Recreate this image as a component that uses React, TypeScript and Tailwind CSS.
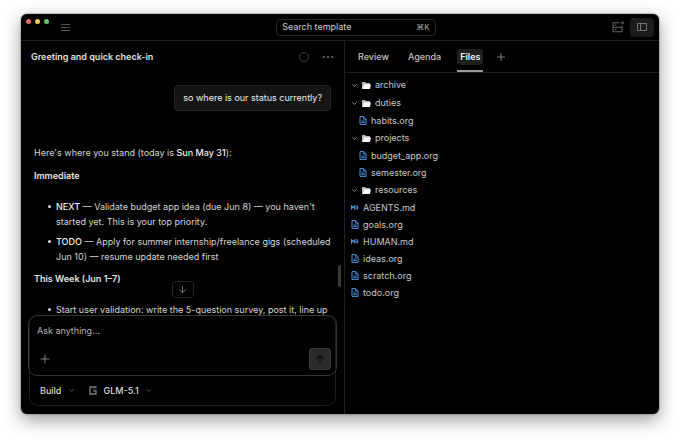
import React, { useState } from 'react';
import { ArrowDown, ArrowUp, ChevronDown, Plus } from 'lucide-react';

type FileKind = 'org' | 'md';

interface TreeNode {
  name: string;
  kind: 'folder' | FileKind;
  children?: TreeNode[];
}

const tree: TreeNode[] = [
  { name: 'archive', kind: 'folder' },
  { name: 'duties', kind: 'folder', children: [{ name: 'habits.org', kind: 'org' }] },
  {
    name: 'projects',
    kind: 'folder',
    children: [
      { name: 'budget_app.org', kind: 'org' },
      { name: 'semester.org', kind: 'org' },
    ],
  },
  { name: 'resources', kind: 'folder' },
  { name: 'AGENTS.md', kind: 'md' },
  { name: 'goals.org', kind: 'org' },
  { name: 'HUMAN.md', kind: 'md' },
  { name: 'ideas.org', kind: 'org' },
  { name: 'scratch.org', kind: 'org' },
  { name: 'todo.org', kind: 'org' },
];

const FolderIcon = () => (
  <svg viewBox="0 0 18 14" className="h-[7px] w-[9px] shrink-0" aria-hidden="true">
    <path d="M0 14V1.5C0 .7.7 0 1.5 0H6l2 2h6.5c.8 0 1.5.7 1.5 1.5V6H4L1.5 14z" fill="#bdbdbd" />
    <path d="M4 5h14l-2.2 9H1z" fill="#ffffff" />
  </svg>
);

const DocIcon = () => (
  <svg viewBox="0 0 16 18" className="h-[9px] w-2 shrink-0" fill="none" stroke="#4f95e0" aria-hidden="true">
    <path d="M2 1.2h7.5L14 5.8v11H2z" strokeWidth="2" strokeLinejoin="round" />
    <path d="M9 1.5V6.2h5" strokeWidth="1.6" />
    <path d="M4.5 10h7M4.5 13.2h7" strokeWidth="1.8" />
  </svg>
);

const MarkdownIcon = () => (
  <svg viewBox="0 0 16 10" className="h-[5px] w-2 shrink-0" fill="none" stroke="#4f95e0" strokeWidth="2.4" aria-hidden="true">
    <path d="M1.2 9.5V1.8L4.4 5.4 7.6 1.8V9.5" />
    <path d="M12.4 0.5V7" />
    <path d="M9.2 5h6.4l-3.2 4.4z" fill="#4f95e0" stroke="none" />
  </svg>
);

const MenuIcon = () => (
  <svg viewBox="0 0 9 8" className="h-2 w-[9px]" stroke="#6b6b6b" aria-hidden="true">
    <path d="M0 1.5h9M0 4.5h9M0 7.5h9" strokeWidth="0.8" />
  </svg>
);

const ServerIcon = () => (
  <svg viewBox="0 0 24 24" className="h-3 w-3" fill="none" stroke="#6e6e6e" strokeWidth="1.8" aria-hidden="true">
    <path d="M15 3.5H2v18h18V9" />
    <path d="M2 12.5h18" />
    <path d="M5.5 8h3.5M5.5 17h3.5" />
    <circle cx="21" cy="3.5" r="3" fill="#4a4a4a" stroke="none" />
  </svg>
);

const PanelIcon = () => (
  <svg viewBox="0 0 10 10" className="h-[10px] w-[10px]" fill="none" stroke="#808080" aria-hidden="true">
    <path d="M0.5 1.5h9v7h-9z" strokeWidth="0.9" />
    <path d="M3.5 1.5v7" strokeWidth="0.9" />
  </svg>
);

const ModelIcon = () => (
  <svg viewBox="0 0 8 9" className="h-[9px] w-2 shrink-0" fill="none" stroke="#808080" aria-hidden="true">
    <path d="M7.5 1H1v7h6V4.8H4" strokeWidth="1.3" />
    <path d="M3.2 3h4.3" strokeWidth="0.7" stroke="#5a5a5a" />
  </svg>
);

const TitleBar = () => (
  <header className="flex h-[27px] shrink-0 items-center border-b border-[#1f1f1f]">
    <div className="flex w-2/5 items-center gap-3 pl-[5px]">
      <div className="flex gap-1 pb-3">
        <span className="h-[5px] w-[5px] rounded-full bg-[#ee6a6a]" />
        <span className="h-[5px] w-[5px] rounded-full bg-[#f5c84c]" />
        <span className="h-[5px] w-[5px] rounded-full bg-[#62c46b]" />
      </div>
      <button type="button" aria-label="Toggle sidebar">
        <MenuIcon />
      </button>
    </div>
    <button
      type="button"
      className="flex h-[17px] w-1/4 items-center justify-between rounded border border-[#242424] px-[5px] text-[9px] text-[#d0d0d0]"
    >
      <span>Search template</span>
      <kbd className="font-[Inter,'DejaVu_Sans',sans-serif] text-[8px] text-[#a8a8a8]">⌘K</kbd>
    </button>
    <div className="flex flex-1 items-center justify-end gap-[2px] pr-[5px]">
      <button type="button" aria-label="Server status" className="flex h-[18px] w-5 items-center justify-center">
        <ServerIcon />
      </button>
      <button
        type="button"
        aria-label="Toggle side panel"
        className="flex h-[19px] w-6 items-center justify-center rounded bg-[#1b1b1b]"
      >
        <PanelIcon />
      </button>
    </div>
  </header>
);

const Bullet: React.FC<{ children: React.ReactNode }> = ({ children }) => (
  <li className="flex gap-[5px]">
    <span className="mt-[6px] h-[3px] w-[3px] shrink-0 rounded-full bg-[#d6d6d6]" />
    <p>{children}</p>
  </li>
);

const Strong: React.FC<{ children: React.ReactNode }> = ({ children }) => (
  <strong className="font-medium text-[#f0f0f0]">{children}</strong>
);

const Messages = () => (
  <div className="relative min-h-0 flex-1 overflow-hidden">
    <div className="flex h-full flex-col overflow-hidden px-[13px] pt-3">
      <p className="self-end rounded border border-[#262626] bg-[#151515] px-2 py-1 text-[9px] leading-4 text-[#ededed]">
        so where is our status currently?
      </p>
      <div className="mt-[34px] text-[9px] leading-[15px] text-[#d6d6d6]">
        <p>
          Here's where you stand (today is <Strong>Sun May 31</Strong>):
        </p>
        <h2 className="mt-2 font-semibold text-[#e6e6e6]">Immediate</h2>
        <ul className="mt-4 flex flex-col gap-[5px] pl-[14px]">
          <Bullet>
            <Strong>NEXT</Strong> — Validate budget app idea (due Jun 8) — you haven't started yet. This is your top priority.
          </Bullet>
          <Bullet>
            <Strong>TODO</Strong> — Apply for summer internship/freelance gigs (scheduled Jun 10) — resume update needed first
          </Bullet>
        </ul>
        <h2 className="mt-[7px] font-semibold text-[#e6e6e6]">This Week (Jun 1–7)</h2>
        <ul className="mt-4 pl-[14px]">
          <Bullet>Start user validation: write the 5-question survey, post it, line up</Bullet>
        </ul>
      </div>
    </div>
    <button
      type="button"
      aria-label="Scroll to latest"
      className="absolute bottom-[17px] left-1/2 flex h-[17px] w-[22px] -translate-x-1/2 items-center justify-center rounded border border-[#262626] bg-black text-[#8c8c8c]"
    >
      <ArrowDown size={11} strokeWidth={1.8} />
    </button>
    <div className="absolute right-[3px] bottom-7 h-[22px] w-[3px] rounded-full bg-[#3c3c3c]" />
  </div>
);

const Composer = () => (
  <form className="mx-2 mb-2 rounded-[9px] border border-[#1e1e1e]" onSubmit={(e) => e.preventDefault()}>
    <div className="-mx-[2px] -mt-px rounded-[9px] border border-[#333333] px-2 pt-[7px] pb-[5px]">
      <textarea
        rows={1}
        aria-label="Message"
        placeholder="Ask anything..."
        className="block h-[15px] w-full resize-none overflow-hidden bg-transparent text-[9px] leading-[15px] text-[#d6d6d6] outline-none placeholder:text-[#b4b4b4]"
      />
      <div className="mt-[10px] flex items-center justify-between">
        <button type="button" aria-label="Attach" className="px-px text-[#8a8a8a]">
          <Plus size={14} strokeWidth={1.6} />
        </button>
        <button
          type="submit"
          aria-label="Send"
          className="-mr-[3px] flex h-[22px] w-[22px] items-center justify-center rounded-[3px] border border-[#383838] bg-[#2b2b2b] text-[#0c0c0c]"
        >
          <ArrowUp size={12} strokeWidth={2.4} />
        </button>
      </div>
    </div>
    <div className="flex h-[29px] items-center pl-[10px] text-[9px] font-medium text-[#dcdcdc]">
      <div className="flex items-center gap-[7px]">
        <select aria-label="Mode" className="field-sizing-content appearance-none bg-transparent outline-none">
          <option>Build</option>
        </select>
        <ChevronDown size={7} strokeWidth={2.5} className="text-[#777777]" />
      </div>
      <div className="ml-[14px] flex items-center gap-[6px]">
        <ModelIcon />
        <select aria-label="Model" className="field-sizing-content appearance-none bg-transparent outline-none">
          <option>GLM-5.1</option>
        </select>
        <ChevronDown size={7} strokeWidth={2.5} className="text-[#777777]" />
      </div>
    </div>
  </form>
);

const ChatPanel = () => (
  <section className="flex min-h-0 w-[324px] max-w-[51%] shrink-0 flex-col border-r border-[#1f1f1f]">
    <div className="flex h-8 shrink-0 items-center justify-between pr-[11px] pl-[10px]">
      <h1 className="text-[9px] font-semibold text-[#e0e0e0]">Greeting and quick check-in</h1>
      <div className="flex items-center gap-[14px]">
        <span className="h-[10px] w-[10px] rounded-full border border-[#444444]" />
        <button type="button" aria-label="More options" className="flex gap-[2px]">
          <span className="h-[2px] w-[2px] rounded-full bg-[#777777]" />
          <span className="h-[2px] w-[2px] rounded-full bg-[#777777]" />
          <span className="h-[2px] w-[2px] rounded-full bg-[#777777]" />
        </button>
      </div>
    </div>
    <Messages />
    <Composer />
  </section>
);

const TreeRow: React.FC<{ node: TreeNode; depth?: number }> = ({ node, depth = 0 }) => {
  const [open, setOpen] = useState(true);

  if (node.kind === 'folder') {
    return (
      <li>
        <button
          type="button"
          aria-expanded={open}
          onClick={() => setOpen(!open)}
          className="flex h-[18px] w-full items-center gap-1"
        >
          <ChevronDown size={7} strokeWidth={2.8} className={open ? 'text-[#b8b8b8]' : '-rotate-90 text-[#b8b8b8]'} />
          <FolderIcon />
          <span>{node.name}</span>
        </button>
        {open && node.children && (
          <ul>
            {node.children.map((child) => (
              <TreeRow key={child.name} node={child} depth={depth + 1} />
            ))}
          </ul>
        )}
      </li>
    );
  }

  return (
    <li>
      <button
        type="button"
        className={depth > 0 ? 'flex h-[17px] w-full items-center gap-1 pl-2' : 'flex h-[17px] w-full items-center gap-1'}
      >
        {node.kind === 'md' ? <MarkdownIcon /> : <DocIcon />}
        <span>{node.name}</span>
      </button>
    </li>
  );
};

const tabs = ['Review', 'Agenda', 'Files'];

const SidePanel = () => {
  const [active, setActive] = useState('Files');

  return (
    <section className="min-w-0 flex-1">
      <div className="flex h-8 items-stretch border-b border-[#1f1f1f] pl-[10px]">
        <div role="tablist" className="flex gap-[13px]">
          {tabs.map((tab) => (
            <button
              key={tab}
              type="button"
              role="tab"
              aria-selected={tab === active}
              onClick={() => setActive(tab)}
              className={
                tab === active
                  ? 'flex items-center border-b-2 border-[#9a9a9a] pt-[2px] text-[9px] font-semibold text-[#f2f2f2]'
                  : 'flex items-center border-b-2 border-transparent pt-[2px] text-[9px] font-medium text-[#c4c4c4]'
              }
            >
              <span className={tab === active ? 'rounded bg-[#1f1f1f] px-[3px] leading-4' : 'px-[3px] leading-4'}>{tab}</span>
            </button>
          ))}
        </div>
        <button type="button" aria-label="Add tab" className="ml-3 text-[#8a8a8a]">
          <Plus size={12} strokeWidth={1.8} />
        </button>
      </div>
      <ul className="pt-[3px] pl-[6px] text-[9px] text-[#c8c8c8]">
        {tree.map((node) => (
          <TreeRow key={node.name} node={node} />
        ))}
      </ul>
    </section>
  );
};

export default function App() {
  return (
    <div className="flex h-screen flex-col bg-white px-[21px] pt-[14px] pb-7 font-[Inter,sans-serif]">
      <main className="flex min-h-0 flex-1 flex-col overflow-hidden rounded-md bg-black shadow-[0_6px_18px_rgba(0,0,0,0.4),0_0_2px_rgba(0,0,0,0.6)]">
        <TitleBar />
        <div className="flex min-h-0 flex-1">
          <ChatPanel />
          <SidePanel />
        </div>
      </main>
    </div>
  );
}
